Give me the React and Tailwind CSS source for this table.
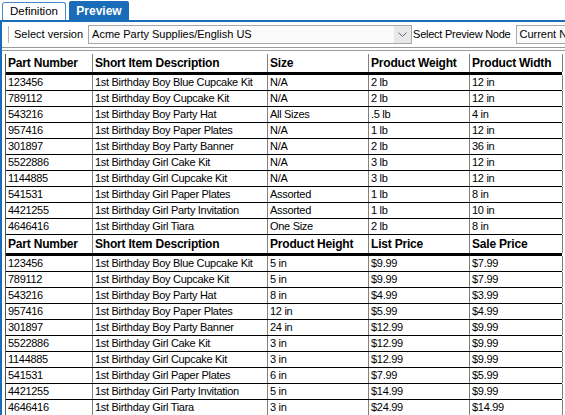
const items = [
  ['123456', '1st Birthday Boy Blue Cupcake Kit', 'N/A', '2 lb', '12 in', '5 in', '$9.99', '$7.99'],
  ['789112', '1st Birthday Boy Cupcake Kit', 'N/A', '2 lb', '12 in', '5 in', '$9.99', '$7.99'],
  ['543216', '1st Birthday Boy Party Hat', 'All Sizes', '.5 lb', '4 in', '8 in', '$4.99', '$3.99'],
  ['957416', '1st Birthday Boy Paper Plates', 'N/A', '1 lb', '12 in', '12 in', '$5.99', '$4.99'],
  ['301897', '1st Birthday Boy Party Banner', 'N/A', '2 lb', '36 in', '24 in', '$12.99', '$9.99'],
  ['5522886', '1st Birthday Girl Cake Kit', 'N/A', '3 lb', '12 in', '3 in', '$12.99', '$9.99'],
  ['1144885', '1st Birthday Girl Cupcake Kit', 'N/A', '3 lb', '12 in', '3 in', '$12.99', '$9.99'],
  ['541531', '1st Birthday Girl Paper Plates', 'Assorted', '1 lb', '8 in', '6 in', '$7.99', '$5.99'],
  ['4421255', '1st Birthday Girl Party Invitation', 'Assorted', '1 lb', '10 in', '5 in', '$14.99', '$9.99'],
  ['4646416', '1st Birthday Girl Tiara', 'One Size', '2 lb', '8 in', '3 in', '$24.99', '$14.99'],
]

const widths = ['w-[87px]', 'w-[175px]', 'w-[101px]', 'w-[101px]', 'w-[93px]']

function Grid({ headers, rows }) {
  return (
    <div className="w-[557px] border-l border-[#555]">
      <div className="flex h-[18px] border-b-[3px] border-black box-content">
        {headers.map((h, i) => (
          <div
            key={h}
            className={`${widths[i]} shrink-0 border-r border-[#808080] pl-[2px] flex items-center font-bold text-[12px] tracking-[-0.2px] text-black whitespace-nowrap overflow-hidden`}
          >
            {h}
          </div>
        ))}
      </div>
      {rows.map((r, ri) => (
        <div key={ri} className="flex h-[16px] border-b border-black">
          {r.map((c, i) => (
            <div
              key={i}
              className={`${widths[i]} shrink-0 border-r border-[#808080] pl-[2px] flex items-center text-[11px] tracking-[-0.3px] leading-none text-black whitespace-nowrap overflow-hidden`}
            >
              {c}
            </div>
          ))}
        </div>
      ))}
    </div>
  )
}

export default function App() {
  const top = items.map(r => [r[0], r[1], r[2], r[3], r[4]])
  const bottom = items.map(r => [r[0], r[1], r[5], r[6], r[7]])

  return (
    <div className="w-[565px] h-[415px] overflow-hidden bg-white font-['Liberation_Sans',Arial,sans-serif] text-black">
      {/* tab strip */}
      <div className="flex items-end h-[20px] pl-[2px] gap-[3px]">
        <div className="h-[18px] w-[64px] border border-b-0 border-[#4a86c5] rounded-t-[3px] bg-white flex items-center justify-center text-[11.5px]">
          Definition
        </div>
        <div className="h-[19px] w-[60px] rounded-t-[2px] bg-[#1a6cb9] flex items-center justify-center text-white font-bold text-[12px]">
          Preview
        </div>
      </div>

      <div className="h-[395px] border-t-2 border-l-2 border-[#1a6cb9] flex flex-col">
        {/* toolbar */}
        <div className="h-[25px] flex items-center bg-white shrink-0 overflow-hidden">
          <div className="ml-[6px] w-[2px] h-[17px] border-l border-[#b5b5b5] border-r border-r-white shrink-0" />
          <span className="ml-[4px] text-[11px] whitespace-nowrap">Select version</span>
          <div className="ml-[5px] w-[324px] h-[19px] border border-[#a8a8a8] bg-[#fbfbfb] flex items-center shrink-0">
            <span className="pl-[3px] text-[11px] flex-1 whitespace-nowrap">Acme Party Supplies/English US</span>
            <div className="w-[17px] h-full bg-[#e8e8e8] flex items-center justify-center">
              <svg width="9" height="6" viewBox="0 0 9 6" fill="none" stroke="#666" strokeWidth="1">
                <path d="M0.5 0.5 L4.5 4.5 L8.5 0.5" />
              </svg>
            </div>
          </div>
          <span className="ml-[1px] text-[11px] tracking-[-0.25px] whitespace-nowrap">Select Preview Node</span>
          <div className="ml-[6px] w-[80px] h-[19px] border border-[#a8a8a8] bg-[#fbfbfb] flex items-center shrink-0">
            <span className="pl-[2px] text-[11px] whitespace-nowrap">Current Node</span>
          </div>
        </div>
        <div className="h-[4px] border-t border-b border-[#9a9a9a] shrink-0" />

        <div className="pl-[3px] pt-[3px]">
          <Grid headers={['Part Number', 'Short Item Description', 'Size', 'Product Weight', 'Product Width']} rows={top} />
          <Grid headers={['Part Number', 'Short Item Description', 'Product Height', 'List Price', 'Sale Price']} rows={bottom} />
        </div>
      </div>
    </div>
  )
}
